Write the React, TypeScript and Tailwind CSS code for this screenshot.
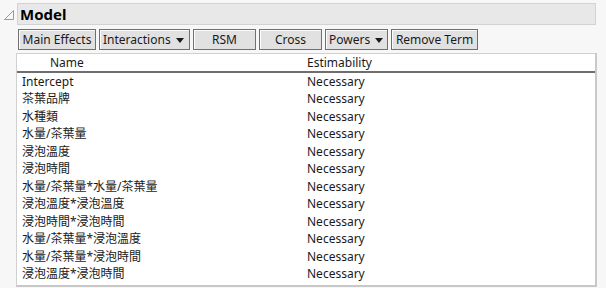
import React from "react";

const rows = [
  "Intercept",
  "茶葉品牌",
  "水種類",
  "水量/茶葉量",
  "浸泡溫度",
  "浸泡時間",
  "水量/茶葉量*水量/茶葉量",
  "浸泡溫度*浸泡溫度",
  "浸泡時間*浸泡時間",
  "水量/茶葉量*浸泡溫度",
  "水量/茶葉量*浸泡時間",
  "浸泡溫度*浸泡時間",
];

function Btn({ label, w, drop }: { label: string; w: string; drop?: boolean }) {
  return (
    <div
      className={`${w} h-[21px] border border-[#707070] bg-[#e1e1e1] shadow-[inset_1px_1px_0_#fcfcfc] flex items-center ${drop ? "justify-start pl-[3px]" : "justify-center"} text-[#1a1a1a]`}
    >
      <span>{label}</span>
      {drop && (
        <svg width="8" height="5" viewBox="0 0 8 5" className="ml-[5px] mt-[1px]">
          <polygon points="0,0 8,0 4,5" fill="#1a1a1a" />
        </svg>
      )}
    </div>
  );
}

export default function App() {
  return (
    <div
      className="w-[606px] h-[288px] bg-[#f7f7f7] text-[12px] text-[#1a1a1a] overflow-hidden"
      style={{ fontFamily: '"Noto Sans", "Noto Sans CJK TC", sans-serif' }}
    >
      <div className="flex items-center pt-[3px]">
        <svg width="12" height="12" viewBox="0 0 12 12" className="ml-[3px] mr-[2px] mt-[2px]">
          <polygon points="10.5,1.5 10.5,10.5 1.5,10.5" fill="none" stroke="#9a9a9a" strokeWidth="1" />
        </svg>
        <div className="w-[579px] h-[22px] bg-[#e8e8e8] border border-[#d3d3d3] flex items-center pl-[2px] text-[15px] font-bold text-black leading-none">
          Model
        </div>
      </div>
      <div className="flex gap-[3px] ml-[18px] mt-[4px] leading-none">
        <Btn label="Main Effects" w="w-[78px]" />
        <Btn label="Interactions" w="w-[91px]" drop />
        <Btn label="RSM" w="w-[63px]" />
        <Btn label="Cross" w="w-[63px]" />
        <Btn label="Powers" w="w-[63px]" drop />
        <Btn label="Remove Term" w="w-[87px]" />
      </div>
      <div className="ml-[16px] mt-[3px] w-[581px] h-[234px] bg-white border border-[#d0d0d0] border-r-2 border-b-2 border-r-[#c8c8c8] border-b-[#c8c8c8]">
        <div className="flex h-[19px] items-center border-b-2 border-[#6e6e6e]">
          <div className="w-[290px] pl-[33px]">Name</div>
          <div>Estimability</div>
        </div>
        {rows.map((r) => (
          <div key={r} className="flex h-[17.5px] items-center">
            <div className="w-[290px] pl-[5px]">{r}</div>
            <div>Necessary</div>
          </div>
        ))}
      </div>
    </div>
  );
}
